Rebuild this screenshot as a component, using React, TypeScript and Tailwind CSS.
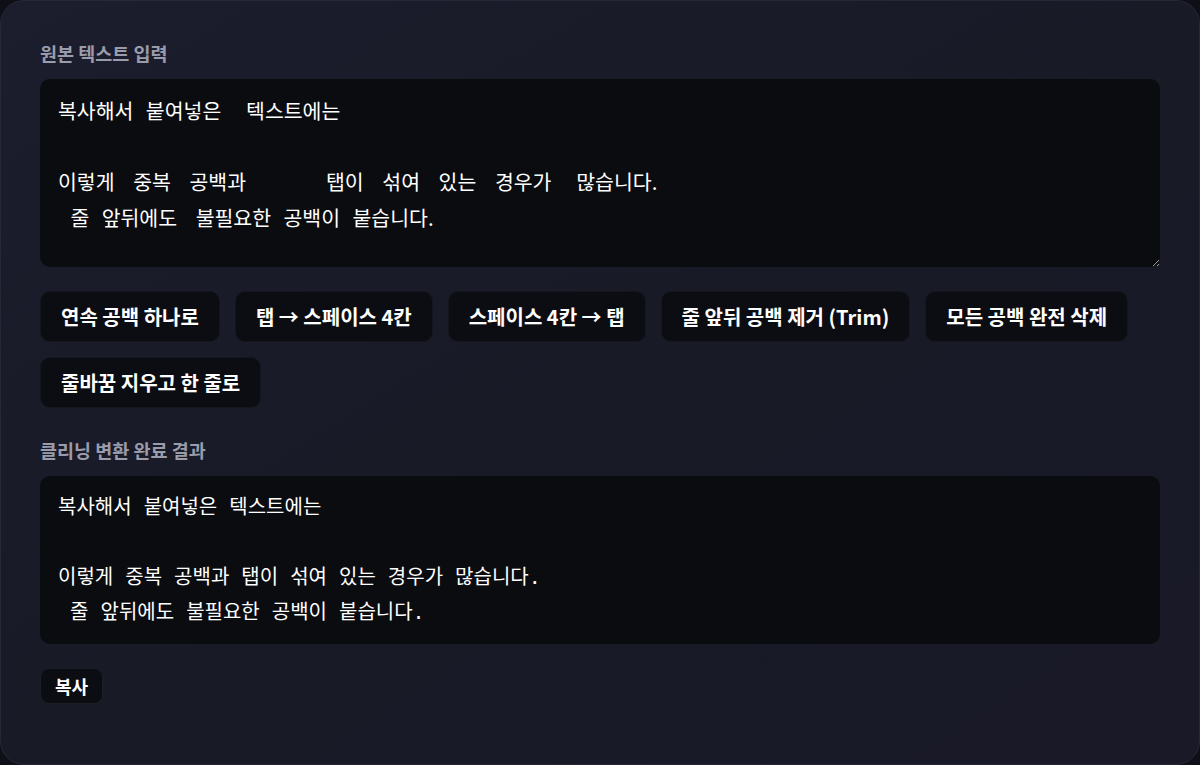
const source =
  "복사해서  붙여넣은    텍스트에는\n\n이렇게   중복   공백과\t탭이   섞여   있는   경우가    많습니다.\n  줄  앞뒤에도   불필요한  공백이  붙습니다.";

const cleaned =
  "복사해서 붙여넣은 텍스트에는\n\n이렇게 중복 공백과 탭이 섞여 있는 경우가 많습니다.\n 줄 앞뒤에도 불필요한 공백이 붙습니다.";

const actions = [
  "연속 공백 하나로",
  "탭 → 스페이스 4칸",
  "스페이스 4칸 → 탭",
  "줄 앞뒤 공백 제거 (Trim)",
  "모든 공백 완전 삭제",
  "줄바꿈 지우고 한 줄로",
];

function Label({ children }: { children: string }) {
  return (
    <h2 className="text-[18.5px] leading-6 font-bold text-[#9a9cab] mb-[14px]">{children}</h2>
  );
}

export default function App() {
  return (
    <div className="w-full h-[765px] bg-[#0f1017] font-['Noto_Sans_CJK_KR','Noto_Sans',sans-serif]">
      <div className="h-full rounded-[24px] border border-[#262837] bg-gradient-to-br from-[#1c1d2d] via-[#181a26] to-[#191927] px-[39px] pt-[40px]">
        <Label>원본 텍스트 입력</Label>
        <textarea
          defaultValue={source}
          spellCheck={false}
          className="block w-full h-[188px] rounded-[10px] bg-[#0b0c10] px-[18px] py-[14px] text-[20.5px] leading-[35.5px] text-white outline-none [word-spacing:1.6px] [tab-size:134px] font-['Noto_Sans_CJK_KR',sans-serif]"
        />

        <div className="flex flex-wrap gap-[15px] mt-[24px]">
          {actions.map((a) => (
            <button
              key={a}
              className="h-[51px] px-[20px] rounded-[10px] bg-[#0c0d12] text-[20px] font-bold text-white border border-[#15161d]"
            >
              {a}
            </button>
          ))}
        </div>

        <div className="mt-[30px]">
          <Label>클리닝 변환 완료 결과</Label>
          <pre className="w-full rounded-[10px] bg-[#0b0c10] px-[18px] py-[14px] text-[20px] leading-[35px] text-white whitespace-pre-wrap font-['DejaVu_Sans_Mono','Noto_Sans_CJK_KR',monospace]">
            {cleaned}
          </pre>
          <button className="mt-[24px] h-[36px] px-[14px] rounded-[9px] bg-[#0c0d12] border border-[#1c1d26] text-[18px] font-bold text-white">
            복사
          </button>
        </div>
      </div>
    </div>
  );
}
